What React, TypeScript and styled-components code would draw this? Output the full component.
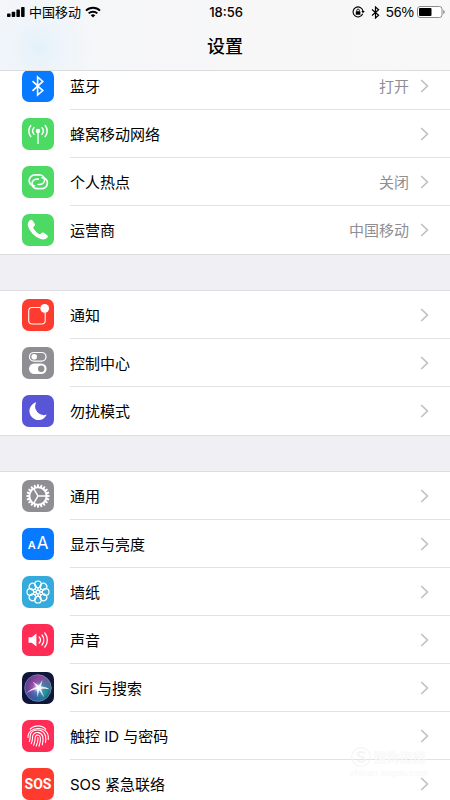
import React from "react";
import styled, { createGlobalStyle } from "styled-components";

const GlobalStyle = createGlobalStyle`
  * { box-sizing: border-box; }
  html, body { margin: 0; padding: 0; background: #fff; }
  body {
    font-family: Inter, "Noto Sans CJK SC", sans-serif;
    color: #000;
    -webkit-font-smoothing: antialiased;
  }
`;

const Screen = styled.div`
  position: relative;
  height: 100vh;
  overflow: hidden;
  background: #efeff4;
`;

const Header = styled.header`
  position: relative;
  z-index: 1;
  height: 71px;
  border-bottom: 1px solid #dcdcde;
  background:
    radial-gradient(circle at 38px 48px, #e4f1fa 0, rgba(236, 244, 250, 0.8) 24px, rgba(246, 247, 249, 0) 56px),
    linear-gradient(90deg, #f4f6f9 0, #f7f7f8 50%, #f8f8f9 100%);
`;

const StatusBar = styled.div`
  display: grid;
  grid-template-columns: 1fr auto 1fr;
  align-items: center;
  height: 24px;
  padding: 0 5px 0 7px;
  font-size: 13px;
  line-height: 24px;
`;

const StatusSide = styled.div<{ $end?: boolean }>`
  display: flex;
  align-items: center;
  justify-content: ${(p) => (p.$end ? "flex-end" : "flex-start")};
  gap: ${(p) => (p.$end ? "6px" : "4px")};
`;

const Percent = styled.span`
  display: flex;
  align-items: center;
  gap: 3px;
  font-family: "Liberation Sans", Inter, sans-serif;
  font-size: 14px;
`;

const Clock = styled.time`
  font-family: Inter, sans-serif;
  font-weight: 500;
`;

const Title = styled.h1`
  margin: 0;
  text-align: center;
  font-size: 18px;
  line-height: 46px;
  font-weight: 500;
`;

const Main = styled.main`
  display: flex;
  flex-direction: column;
  gap: 37px;
  margin-top: -9px;
`;

const Group = styled.ul`
  list-style: none;
  margin: 0;
  padding: 0;
  background: #fff;
  box-shadow: 0 1px 0 #dedee2, 0 -1px 0 #dedee2;
`;

const Row = styled.a`
  display: flex;
  align-items: center;
  height: 48px;
  padding-left: 22px;
  color: inherit;
  text-decoration: none;
`;

const Body = styled.span`
  flex: 1;
  display: flex;
  align-items: center;
  height: 48px;
  margin-left: 16px;
  padding-right: 21px;
  border-bottom: 1px solid #e2e2e4;

  li:last-child & {
    border-bottom-color: transparent;
  }
`;

const Label = styled.span`
  flex: 1;
  padding-top: 2px;
  font-size: 15px;
  line-height: 24px;
`;

const Value = styled.span`
  margin-right: 11px;
  padding-top: 2px;
  font-size: 15px;
  line-height: 24px;
  color: #8e8e93;
`;

const Tile = styled.span<{ $bg: string }>`
  display: flex;
  align-items: center;
  justify-content: center;
  width: 32px;
  height: 32px;
  border-radius: 7px;
  overflow: hidden;
  background: ${(p) => p.$bg};
  color: #fff;
`;

const Sos = styled.span`
  font-family: Roboto, sans-serif;
  font-weight: 700;
  font-size: 14px;
  line-height: 32px;
`;

const LetterPair = styled.span`
  display: flex;
  align-items: baseline;
  gap: 1px;
  font-family: Inter, sans-serif;
  line-height: 32px;
`;

const Letter = styled.span<{ $large?: boolean }>`
  font-size: ${(p) => (p.$large ? 17 : 11)}px;
  font-weight: ${(p) => (p.$large ? 400 : 600)};
`;

const Watermark = styled.div`
  position: absolute;
  right: 22px;
  bottom: 22px;
  z-index: 2;
  display: grid;
  grid-template-columns: 22px auto;
  align-items: center;
  column-gap: 2px;
  color: rgba(255, 255, 255, 0.8);
  text-shadow: 0 0 1px rgba(0, 0, 0, 0.08);
  pointer-events: none;
`;

const WatermarkName = styled.span`
  font-size: 13px;
  line-height: 22px;
  font-weight: 700;
`;

const WatermarkSite = styled.span`
  grid-column: 1 / -1;
  font-size: 9px;
  line-height: 10px;
`;

const Glyph = ({ children }: { children: React.ReactNode }) => (
  <svg width="32" height="32" viewBox="0 0 32 32" fill="none" stroke="#fff" strokeLinecap="round" strokeLinejoin="round" aria-hidden="true">
    {children}
  </svg>
);

const BluetoothGlyph = () => (
  <Glyph>
    <path d="M10.500 11.200 20.800 20.600 15.600 25V7l5.200 4.400L10.500 20.800" strokeWidth="1.600" strokeLinejoin="miter" strokeLinecap="butt" />
  </Glyph>
);

const AntennaGlyph = () => (
  <Glyph>
    <circle cx="16" cy="13" r="2.300" fill="#fff" stroke="none" />
    <path d="M16 14v12" strokeWidth="1.400" strokeLinecap="butt" />
    <path d="M12 9.800a4.800 4.800 0 0 0 0 6.400M20 9.800a4.800 4.800 0 0 1 0 6.400M8.800 7.600a8.400 8.400 0 0 0 0 10.800M23.200 7.600a8.400 8.400 0 0 1 0 10.800" strokeWidth="1.500" />
  </Glyph>
);

const hotspotLoop = "M12.500 19.900C9.200 19.500 7.200 17.300 7.200 14.600 7.200 11.400 9.800 8.900 13.200 8.900H17c3.400 0 5.600 2.200 5.600 4.900 0 2.800-2.300 4.700-4.900 4.700h-1.500";
const HotspotGlyph = () => (
  <Glyph>
    <path d={hotspotLoop} strokeWidth="1.700" />
    <path d={hotspotLoop} strokeWidth="1.700" transform="rotate(180 16.300 15.800)" />
  </Glyph>
);

const PhoneGlyph = () => (
  <Glyph>
    <path
      d="M8 6.200c1-.9 2.100-.5 2.800.5l1.900 3.100c.6 1 .4 1.700-.3 2.300l-.8.700c-.5.500-.5 1-.1 1.700 1.300 2.200 3.300 4.200 5.500 5.500.7.400 1.200.4 1.600-.1l.8-.9c.6-.7 1.400-.8 2.300-.2l3.200 2.100c1 .7 1.300 1.600.5 2.600-1.500 1.900-3.800 2.500-6.700 1.500-6-2.100-10.700-6.700-12.600-12.400C5.200 10 6.100 7.800 8 6.200z"
      fill="#fff"
      stroke="none"
    />
  </Glyph>
);

const NotificationGlyph = () => (
  <Glyph>
    <path d="M18.300 8.500H10a3.300 3.300 0 0 0-3.300 3.300v9.900A3.300 3.300 0 0 0 10 25h9.900a3.300 3.300 0 0 0 3.300-3.300v-8.200" strokeWidth="1.100" strokeLinecap="butt" />
    <circle cx="22.700" cy="9.300" r="4.400" fill="#fff" stroke="none" />
  </Glyph>
);

const ControlGlyph = () => (
  <Glyph>
    <rect x="7.500" y="5.500" width="16.500" height="8.600" rx="4.300" strokeWidth="1.200" />
    <circle cx="12.200" cy="9.800" r="2.800" fill="#fff" stroke="none" />
    <rect x="7" y="16.600" width="17.600" height="10.400" rx="5.200" fill="#fff" stroke="none" />
    <circle cx="19.200" cy="21.800" r="3.200" fill="#8e8e93" stroke="none" />
  </Glyph>
);

const MoonGlyph = () => (
  <Glyph>
    <path d="M14.300 7.300a9 9 0 1 0 10.400 12.300 8.600 8.600 0 0 1-10.400-12.300z" fill="#fff" stroke="none" />
  </Glyph>
);

const teeth = Array.from({ length: 20 }, (_, i) => i * 18);
const GearGlyph = () => (
  <Glyph>
    <circle cx="16" cy="16" r="8.600" strokeWidth="1.900" />
    {teeth.map((a) => (
      <path key={a} d="M15.200 4.300h1.600l.4 3h-2.400z" fill="#fff" stroke="none" transform={`rotate(${a} 16 16)`} />
    ))}
    {[90, 210, 330].map((a) => (
      <path key={a} d="M16 15.500V8" strokeWidth="1.400" transform={`rotate(${a} 16 16)`} />
    ))}
  </Glyph>
);

const petals = Array.from({ length: 8 }, (_, i) => i * 45);
const FlowerGlyph = () => (
  <Glyph>
    {petals.map((a) => (
      <circle key={a} cx="16" cy="8.300" r="3.300" strokeWidth="1.200" transform={`rotate(${a} 16 16)`} />
    ))}
    {petals.map((a) => (
      <path key={a} d="M16 14.600l-1.700-2.100L16 10.900l1.700 1.600z" strokeWidth=".9" transform={`rotate(${a + 22.5} 16 16)`} />
    ))}
    <circle cx="16" cy="16" r="1.700" strokeWidth="1" />
  </Glyph>
);

const SpeakerGlyph = () => (
  <Glyph>
    <path d="M6.500 13.300h3.200l4.700-3.800v13l-4.700-3.800H6.500z" fill="#fff" stroke="none" />
    <path d="M17.200 13a4.500 4.500 0 0 1 0 6M20 11a8 8 0 0 1 0 10M22.800 9a11 11 0 0 1 0 14" strokeWidth="1.300" />
  </Glyph>
);

const SiriGlyph = () => (
  <Glyph>
    <defs>
      <radialGradient id="siri-core" cx=".5" cy=".5" r=".5">
        <stop offset="0" stopColor="#fff" />
        <stop offset=".25" stopColor="#dff6ff" stopOpacity=".7" />
        <stop offset=".6" stopColor="#8fd0ff" stopOpacity=".1" />
        <stop offset="1" stopColor="#8fd0ff" stopOpacity="0" />
      </radialGradient>
      <linearGradient id="siri-orb" x1="0" y1=".2" x2="1" y2=".8">
        <stop offset="0" stopColor="#4c3590" />
        <stop offset=".35" stopColor="#a8479f" />
        <stop offset=".55" stopColor="#537fb5" />
        <stop offset=".8" stopColor="#1c9b94" />
        <stop offset="1" stopColor="#164c6b" />
      </linearGradient>
      <linearGradient id="siri-shade" x1=".8" y1="0" x2=".2" y2="1">
        <stop offset="0" stopColor="#a83f85" stopOpacity=".8" />
        <stop offset=".5" stopColor="#3a4a9c" stopOpacity="0" />
        <stop offset="1" stopColor="#1d52aa" />
      </linearGradient>
    </defs>
    <g stroke="none">
      <circle cx="16" cy="16" r="13.300" fill="url(#siri-orb)" />
      <circle cx="16" cy="16" r="13.300" fill="url(#siri-shade)" />
      <circle cx="16" cy="16" r="9" fill="url(#siri-core)" />
      <path d="M4 21.500c3.500-3.600 7-5.700 10.700-6.600L10.500 9.500l6.200 4.200L20.500 8l-1.600 6.600c3.300.2 6.100 1 8.600 2.700-3-.6-5.600-.7-8.400-.2 1 3 2 5.700 3.300 8.400-2.200-2.500-3.900-5-5.100-7.600l-1.900 7.300-.4-8.200C11.600 17.600 7.800 19 4 21.500z" fill="#fff" opacity=".85" />
    </g>
    <circle cx="16" cy="16" r="13.300" stroke="#7484a8" strokeWidth=".8" />
  </Glyph>
);

const FingerprintGlyph = () => (
  <Glyph>
    <g strokeWidth="1.100">
      <path d="M8.200 9.200C12 4.700 20 4.700 23.800 9.200" />
      <path d="M6 17.500c-.6-11.500 20-12.500 20.300-.5v2.500" />
      <path d="M7.300 21.500c1.400-3 .2-5.500 1.500-8 3-5.600 13-4.400 14.700 2.500.5 2 .4 4.500 0 6.500" />
      <path d="M9.200 23.700c2.300-4.200.5-6.700 2-9 2.300-3.600 8.400-2.600 9.600 1.800.7 2.800.3 5.500-.5 8.300" />
      <path d="M11.600 25.200c2.400-4.700.9-6.700 2-8.900 1.200-1.900 4.200-1.400 4.700 1 .6 3-.2 6-1.300 8.900" />
      <path d="M14.200 26c1.400-3 1.900-5.500 1.800-8.500" />
    </g>
  </Glyph>
);

const Chevron = () => (
  <svg width="9" height="14" viewBox="0 0 9 14" fill="none" stroke="#c1c1c5" strokeWidth="1.700" aria-hidden="true">
    <path d="M1.200 1 7.400 7 1.200 13" />
  </svg>
);

const SignalBars = () => (
  <svg width="18" height="10" viewBox="0 0 18 10" aria-hidden="true">
    <rect x="0" y="6.500" width="3.500" height="3.500" rx=".8" />
    <rect x="4.700" y="4.800" width="3.500" height="5.200" rx=".8" />
    <rect x="9.400" y="2.600" width="3.500" height="7.400" rx=".8" />
    <rect x="14.100" y="0" width="3.500" height="10" rx=".8" />
  </svg>
);

const Wifi = () => (
  <svg width="16" height="12" viewBox="0 0 16 12" fill="none" stroke="#000" strokeWidth="2" aria-hidden="true">
    <path d="M1 4.600a10 10 0 0 1 14 0" />
    <path d="M3.700 7.400a6.100 6.100 0 0 1 8.600 0" />
    <path d="M8 11.600 5.700 9.300a3.300 3.300 0 0 1 4.600 0z" fill="#000" stroke="none" />
  </svg>
);

const RotationLock = () => (
  <svg width="13" height="12" viewBox="0 0 13 12" fill="none" stroke="#000" aria-hidden="true">
    <path d="M10.700 7.800A5 5 0 1 1 11 5.200" strokeWidth="1.100" />
    <path d="M9.300 4.900h3.500L11 7.300z" fill="#000" stroke="none" />
    <rect x="3.800" y="5.300" width="4.600" height="3.400" rx=".5" fill="#000" stroke="none" />
    <path d="M4.800 5.500V4.400a1.300 1.300 0 0 1 2.600 0v1.100" strokeWidth=".9" />
  </svg>
);

const StatusBluetooth = () => (
  <svg width="9" height="13" viewBox="0 0 9 13" fill="none" stroke="#000" strokeWidth="1.200" aria-hidden="true">
    <path d="M1 3.500 7.600 9.300 4.500 12V1l3.100 2.700L1 9.500" />
  </svg>
);

const Battery = () => (
  <svg width="28" height="12" viewBox="0 0 28 12" aria-hidden="true">
    <rect x=".5" y=".5" width="24.500" height="11" rx="2.500" fill="#fff" stroke="#8c8c8e" />
    <rect x="2" y="2" width="12.500" height="8" rx="1" />
    <path d="M26.200 4v4c1-.3 1.500-1.100 1.500-2s-.5-1.700-1.500-2z" fill="#8c8c8e" />
  </svg>
);

const WatermarkLogo = () => (
  <svg width="22" height="22" viewBox="0 0 20 20" fill="none" stroke="#f4f4f4" aria-hidden="true">
    <circle cx="10" cy="10" r="8.500" strokeWidth="1" />
    <path d="M13.500 6.500c-2-1.500-6.500-1.300-6.500 1 0 2.800 6.500 1.700 6.500 4.700 0 2.500-5 2.700-7 .8" strokeWidth="1.800" />
  </svg>
);

type Item = { label: string; value?: string; bg: string; icon: React.ReactNode };

const groups: Item[][] = [
  [
    { label: "蓝牙", value: "打开", bg: "#087aff", icon: <BluetoothGlyph /> },
    { label: "蜂窝移动网络", bg: "#4cd964", icon: <AntennaGlyph /> },
    { label: "个人热点", value: "关闭", bg: "#4cd964", icon: <HotspotGlyph /> },
    { label: "运营商", value: "中国移动", bg: "#4cd964", icon: <PhoneGlyph /> },
  ],
  [
    { label: "通知", bg: "#ff3b30", icon: <NotificationGlyph /> },
    { label: "控制中心", bg: "#8e8e93", icon: <ControlGlyph /> },
    { label: "勿扰模式", bg: "#5856d6", icon: <MoonGlyph /> },
  ],
  [
    { label: "通用", bg: "#8e8e93", icon: <GearGlyph /> },
    {
      label: "显示与亮度",
      bg: "#087aff",
      icon: (
        <LetterPair aria-hidden="true">
          <Letter>A</Letter>
          <Letter $large>A</Letter>
        </LetterPair>
      ),
    },
    { label: "墙纸", bg: "#35aadc", icon: <FlowerGlyph /> },
    { label: "声音", bg: "#ff2d55", icon: <SpeakerGlyph /> },
    { label: "Siri 与搜索", bg: "#101638", icon: <SiriGlyph /> },
    { label: "触控 ID 与密码", bg: "#ff2d55", icon: <FingerprintGlyph /> },
    { label: "SOS 紧急联络", bg: "#ff3b30", icon: <Sos aria-hidden="true">SOS</Sos> },
  ],
];

export default function App() {
  return (
    <Screen>
      <GlobalStyle />
      <Header>
        <StatusBar>
          <StatusSide>
            <SignalBars />
            <span>中国移动</span>
            <Wifi />
          </StatusSide>
          <Clock>18:56</Clock>
          <StatusSide $end>
            <RotationLock />
            <StatusBluetooth />
            <Percent>
              56%
              <Battery />
            </Percent>
          </StatusSide>
        </StatusBar>
        <Title>设置</Title>
      </Header>
      <Main>
        {groups.map((items) => (
          <Group key={items[0].label}>
            {items.map((item) => (
              <li key={item.label}>
                <Row href="#">
                  <Tile $bg={item.bg}>{item.icon}</Tile>
                  <Body>
                    <Label>{item.label}</Label>
                    {item.value && <Value>{item.value}</Value>}
                    <Chevron />
                  </Body>
                </Row>
              </li>
            ))}
          </Group>
        ))}
      </Main>
      <Watermark>
        <WatermarkLogo />
        <WatermarkName>搜狗指南</WatermarkName>
        <WatermarkSite>zhinan.sogou.com</WatermarkSite>
      </Watermark>
    </Screen>
  );
}
